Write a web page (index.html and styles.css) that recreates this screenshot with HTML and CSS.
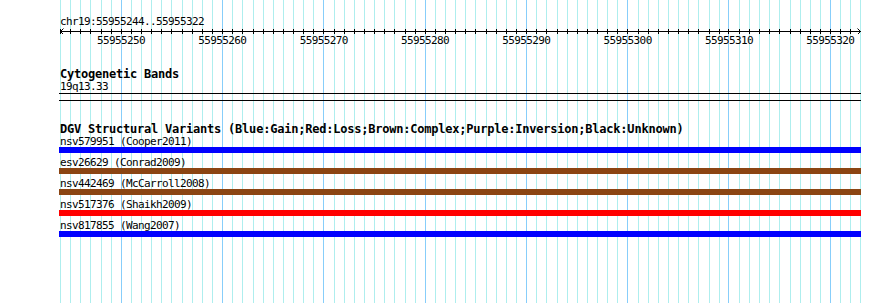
FILE: index.html
```html
<!DOCTYPE html>
<html>
<head>
<meta charset="utf-8">
<link rel="stylesheet" href="styles.css">
</head>
<body>
<div class="page">
  <svg class="grid" width="890" height="303" viewBox="0 0 890 303" shape-rendering="crispEdges">
    <path class="minor" d="M60.5 0V303M70.5 0V303M80.5 0V303M90.5 0V303M101.5 0V303M111.5 0V303M131.5 0V303M141.5 0V303M151.5 0V303M161.5 0V303M171.5 0V303M182.5 0V303M192.5 0V303M202.5 0V303M212.5 0V303M232.5 0V303M242.5 0V303M253.5 0V303M263.5 0V303M273.5 0V303M283.5 0V303M293.5 0V303M303.5 0V303M313.5 0V303M334.5 0V303M344.5 0V303M354.5 0V303M364.5 0V303M374.5 0V303M384.5 0V303M394.5 0V303M405.5 0V303M415.5 0V303M435.5 0V303M445.5 0V303M455.5 0V303M465.5 0V303M475.5 0V303M486.5 0V303M496.5 0V303M506.5 0V303M516.5 0V303M536.5 0V303M546.5 0V303M557.5 0V303M567.5 0V303M577.5 0V303M587.5 0V303M597.5 0V303M607.5 0V303M617.5 0V303M638.5 0V303M648.5 0V303M658.5 0V303M668.5 0V303M678.5 0V303M688.5 0V303M698.5 0V303M709.5 0V303M719.5 0V303M739.5 0V303M749.5 0V303M759.5 0V303M769.5 0V303M779.5 0V303M790.5 0V303M800.5 0V303M810.5 0V303M820.5 0V303M840.5 0V303M850.5 0V303M860.5 0V303"/>
    <path class="major" d="M121.5 0V303M222.5 0V303M323.5 0V303M425.5 0V303M526.5 0V303M627.5 0V303M728.5 0V303M830.5 0V303"/>
  </svg>

  <div class="tracks">
    <section class="ruler">
      <div class="mono ruler-title">chr19:55955244..55955322</div>
      <svg class="axis" width="802" height="6" viewBox="59 28 802 6" shape-rendering="crispEdges">
        <path class="axis-line" d="M60 31.5H861"/>
        <path class="axis-ticks" d="M60.5 29V34M70.5 29V34M80.5 29V34M90.5 29V34M101.5 29V34M111.5 29V34M121.5 29V34M131.5 29V34M141.5 29V34M151.5 29V34M161.5 29V34M171.5 29V34M182.5 29V34M192.5 29V34M202.5 29V34M212.5 29V34M222.5 29V34M232.5 29V34M242.5 29V34M253.5 29V34M263.5 29V34M273.5 29V34M283.5 29V34M293.5 29V34M303.5 29V34M313.5 29V34M323.5 29V34M334.5 29V34M344.5 29V34M354.5 29V34M364.5 29V34M374.5 29V34M384.5 29V34M394.5 29V34M405.5 29V34M415.5 29V34M425.5 29V34M435.5 29V34M445.5 29V34M455.5 29V34M465.5 29V34M475.5 29V34M486.5 29V34M496.5 29V34M506.5 29V34M516.5 29V34M526.5 29V34M536.5 29V34M546.5 29V34M557.5 29V34M567.5 29V34M577.5 29V34M587.5 29V34M597.5 29V34M607.5 29V34M617.5 29V34M627.5 29V34M638.5 29V34M648.5 29V34M658.5 29V34M668.5 29V34M678.5 29V34M688.5 29V34M698.5 29V34M709.5 29V34M719.5 29V34M728.5 29V34M739.5 29V34M749.5 29V34M759.5 29V34M769.5 29V34M779.5 29V34M790.5 29V34M800.5 29V34M810.5 29V34M820.5 29V34M830.5 29V34M840.5 29V34M850.5 29V34"/>
        <path class="axis-arrow" d="M63.5 28.5L60.5 31.5L63.5 34.5M857.5 28.5L860.5 31.5L857.5 34.5" shape-rendering="auto"/>
      </svg>
      <div class="mono ticklabels">
        <span>55955250</span><span>55955260</span><span>55955270</span><span>55955280</span><span>55955290</span><span>55955300</span><span>55955310</span><span>55955320</span>
      </div>
    </section>

    <section class="cyto">
      <div class="bold cyto-title">Cytogenetic Bands</div>
      <div class="mono cyto-band">19q13.33</div>
      <div class="rule"></div>
      <div class="rule rule-second"></div>
    </section>

    <section class="dgv">
      <div class="bold dgv-title">DGV Structural Variants (Blue:Gain;Red:Loss;Brown:Complex;Purple:Inversion;Black:Unknown)</div>
      <div class="variant">
        <div class="mono variant-label">nsv579951 (Cooper2011)</div>
        <div class="bar bar-gain"></div>
      </div>
      <div class="variant">
        <div class="mono variant-label">esv26629 (Conrad2009)</div>
        <div class="bar bar-complex"></div>
      </div>
      <div class="variant">
        <div class="mono variant-label">nsv442469 (McCarroll2008)</div>
        <div class="bar bar-complex"></div>
      </div>
      <div class="variant">
        <div class="mono variant-label">nsv517376 (Shaikh2009)</div>
        <div class="bar bar-loss"></div>
      </div>
      <div class="variant">
        <div class="mono variant-label">nsv817855 (Wang2007)</div>
        <div class="bar bar-gain"></div>
      </div>
    </section>
  </div>
</div>
</body>
</html>
```

FILE: styles.css
```css
html, body {
  margin: 0;
  padding: 0;
  background: #ffffff;
}

.page {
  position: relative;
  width: 890px;
  height: 303px;
  overflow: hidden;
  background: #ffffff;
  color: #000000;
}

.grid {
  position: absolute;
  left: 0;
  top: 0;
  z-index: 0;
}

.grid .minor {
  stroke: #aeeeee;
  stroke-width: 1;
  fill: none;
}

.grid .major {
  stroke: #87cefa;
  stroke-width: 1;
  fill: none;
}

.tracks {
  position: relative;
  z-index: 1;
  margin-left: 59px;
  width: 802px;
  display: flex;
  flex-direction: column;
}

.mono {
  font-family: "DejaVu Sans Mono", "Liberation Mono", monospace;
  font-size: 11px;
  letter-spacing: -0.62px;
  line-height: 13px;
  white-space: pre;
}

.bold {
  font-family: "DejaVu Sans Mono", "Liberation Mono", monospace;
  font-weight: bold;
  font-size: 12px;
  letter-spacing: -0.22px;
  line-height: 13px;
  white-space: pre;
}

.ruler {
  display: flex;
  flex-direction: column;
  padding-top: 15px;
}

.ruler-title {
  padding-left: 1px;
}

.axis {
  display: block;
}

.axis-line,
.axis-ticks,
.axis-arrow {
  stroke: #000000;
  stroke-width: 1;
  fill: none;
}

.ticklabels {
  display: flex;
  padding-left: 11.33px;
}

.ticklabels span {
  width: 101.33px;
  flex: none;
  text-align: center;
}

.cyto {
  display: flex;
  flex-direction: column;
  margin-top: 21px;
}

.cyto-title {
  padding-left: 1px;
}

.cyto-band {
  padding-left: 1px;
  line-height: 11px;
}

.rule {
  height: 1px;
  background: #000000;
  margin-top: 1px;
}

.rule-second {
  margin-top: 6px;
}

.dgv {
  display: flex;
  flex-direction: column;
  margin-top: 21px;
}

.dgv-title {
  padding-left: 1px;
  line-height: 14px;
}

.variant {
  display: flex;
  flex-direction: column;
  margin-bottom: 4px;
}

.variant-label {
  padding-left: 1px;
  line-height: 11px;
}

.bar {
  height: 6px;
}

.bar-gain {
  background: #0000ff;
}

.bar-complex {
  background: #8b4513;
}

.bar-loss {
  background: #ff0000;
}
```
